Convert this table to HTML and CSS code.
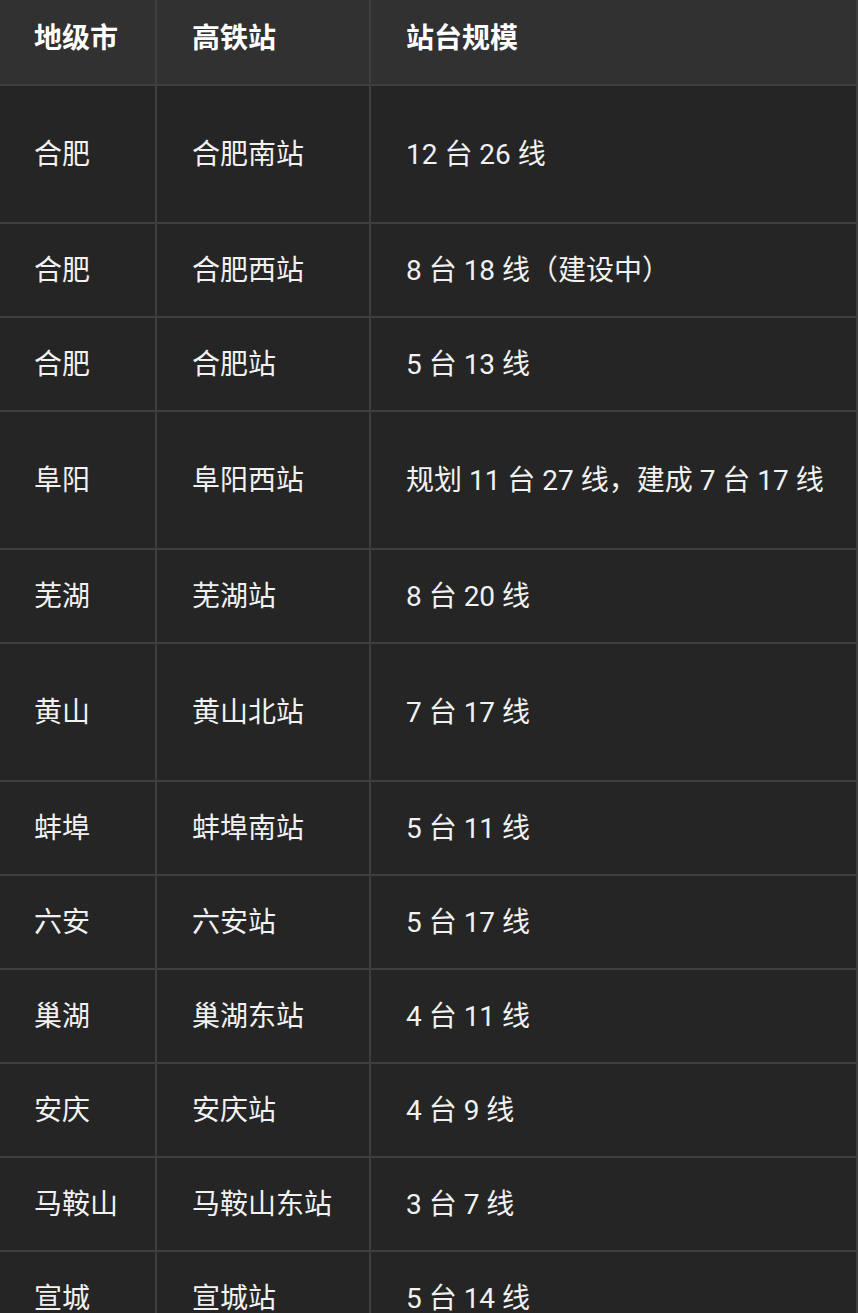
FILE: index.html
```html
<!DOCTYPE html>
<html lang="zh-CN">
<head>
<meta charset="utf-8">
<title>安徽高铁站台规模</title>
<link rel="stylesheet" href="styles.css">
</head>
<body>
<table class="stations">
  <colgroup>
    <col class="c-city">
    <col class="c-station">
    <col class="c-scale">
  </colgroup>
  <thead>
    <tr><th>地级市</th><th>高铁站</th><th>站台规模</th></tr>
  </thead>
  <tbody>
    <tr class="tall"><td>合肥</td><td>合肥南站</td><td>12 台 26 线</td></tr>
    <tr><td>合肥</td><td>合肥西站</td><td>8 台 18 线（建设中）</td></tr>
    <tr><td>合肥</td><td>合肥站</td><td>5 台 13 线</td></tr>
    <tr class="tall"><td>阜阳</td><td>阜阳西站</td><td>规划 11 台 27 线，建成 7 台 17 线</td></tr>
    <tr><td>芜湖</td><td>芜湖站</td><td>8 台 20 线</td></tr>
    <tr class="tall"><td>黄山</td><td>黄山北站</td><td>7 台 17 线</td></tr>
    <tr><td>蚌埠</td><td>蚌埠南站</td><td>5 台 11 线</td></tr>
    <tr><td>六安</td><td>六安站</td><td>5 台 17 线</td></tr>
    <tr><td>巢湖</td><td>巢湖东站</td><td>4 台 11 线</td></tr>
    <tr><td>安庆</td><td>安庆站</td><td>4 台 9 线</td></tr>
    <tr><td>马鞍山</td><td>马鞍山东站</td><td>3 台 7 线</td></tr>
    <tr><td>宣城</td><td>宣城站</td><td>5 台 14 线</td></tr>
  </tbody>
</table>
</body>
</html>
```
FILE: styles.css
```css
html {
  overflow: hidden;
  background: #252525;
}
body {
  margin: 0;
  background: #252525;
  font-family: Roboto, "Noto Sans CJK SC", "Noto Sans", sans-serif;
  color: #f1f1f1;
}
.stations {
  table-layout: fixed;
  width: 860px;
  margin: -10px 0 0 -2px;
  border-collapse: separate;
  border-spacing: 2px;
  background: #3e3e3e;
  font-size: 28px;
}
.c-city { width: 155px; }
.c-station { width: 212px; }
.c-scale { width: 485px; }
.stations th,
.stations td {
  height: 90px;
  padding: 2px 0 0 35px;
  text-align: left;
  vertical-align: middle;
  white-space: nowrap;
  line-height: 1.2;
}
.stations th {
  background: #313131;
  font-weight: 700;
  color: #ffffff;
}
.stations td {
  background: #252525;
  font-weight: 400;
}
.stations tr.tall td {
  height: 134px;
}
.stations th:first-child,
.stations td:first-child {
  padding-left: 34px;
}
```
